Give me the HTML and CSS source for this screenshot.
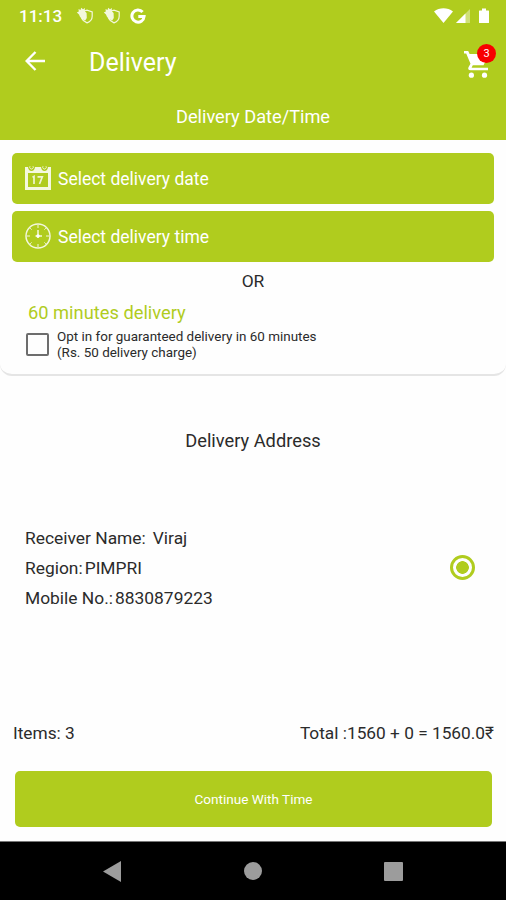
FILE: index.html
```html
<!DOCTYPE html>
<html lang="en">
<head>
<meta charset="utf-8">
<title>Delivery</title>
<link rel="stylesheet" href="styles.css">
</head>
<body>
<div class="screen">
  <header class="header">
    <div class="status">
      <span class="clock">11:13</span>
      <svg class="shield" viewBox="0 0 18 18"><path d="M8 4 11 3.200l5.200 1.800v4.200c0 3.200-2.200 5.500-5.200 6.700-3-1.200-4.500-2.600-5.500-4.600" fill="none" stroke="#fff" stroke-width="1.200" opacity=".85"/><path d="M.8 5.500 2.800 4.500 2.500 2 4.500 3l.7-2.200L7 2.200 9 1 8.600 4l2 2 .2 5-1.600 2.500C6 12.500 3.800 10.500 3 7.500z" fill="#fff" opacity=".85"/></svg>
      <svg class="shield" viewBox="0 0 18 18"><path d="M8 4 11 3.200l5.200 1.800v4.200c0 3.200-2.200 5.500-5.200 6.700-3-1.200-4.500-2.600-5.500-4.600" fill="none" stroke="#fff" stroke-width="1.200" opacity=".85"/><path d="M.8 5.500 2.800 4.500 2.500 2 4.500 3l.7-2.200L7 2.200 9 1 8.600 4l2 2 .2 5-1.600 2.500C6 12.500 3.800 10.500 3 7.500z" fill="#fff" opacity=".85"/></svg>
      <svg class="google" viewBox="0 0 16 16"><path d="M12.600 4A6.100 6.100 0 1 0 14.100 8.500H8.300" fill="none" stroke="#fff" stroke-width="3"/></svg>
      <svg class="signals" viewBox="0 0 58 18"><path d="M0 4.500C5.500.200 13.500.200 19 4.500L9.500 16z" fill="#fff"/><path d="M22 16 36 2v14z" fill="#fff" opacity=".4"/><path d="M22 16 31.500 6.500V16z" fill="#fff"/><path d="M48 1.500h4v2h2.500q.5 0 .5.500v11.500q0 .5-.5.500h-9q-.5 0-.5-.500V4q0-.5.5-.500H48z" fill="#fff"/></svg>
    </div>
    <div class="appbar">
      <svg class="back" viewBox="0 0 20 20"><path d="M20 10H1.800M10.500 1 1.600 10l8.900 9" fill="none" stroke="#fff" stroke-width="2.400"/></svg>
      <h1>Delivery</h1>
      <div class="cart">
        <svg viewBox="0 0 26 27" fill="#fff"><path d="M0 0h4.200l1.400 3H25L19.500 14.300H8.800l-1.200 2.400H24v2.600H6.500C4.300 19.300 3.700 17.500 4.600 16l1.900-3.200L2.200 2.500H0z"/><circle cx="7.400" cy="24.200" r="2.600"/><circle cx="20.500" cy="24.200" r="2.600"/></svg>
        <span class="badge">3</span>
      </div>
    </div>
    <h2>Delivery Date/Time</h2>
  </header>

  <section class="card">
    <button class="pick">
      <svg viewBox="0 0 26 26"><path d="M0 2h3q.5 4 3.500 4T10 2h6q.5 4 3.500 4T23 2h3v23H0zm3 6v14h20V8z" fill="#fff" fill-rule="evenodd" opacity=".86"/><path d="M5 1.200a1.800 1.800 0 1 0 3 0M18 1.200a1.800 1.800 0 1 0 3 0" fill="none" stroke="#fff" opacity=".75"/><path d="M7.500 12.300 9 11.500V19M12.500 11.800h4.800L14.500 19" fill="none" stroke="#fff" stroke-width="1.700" opacity=".8"/></svg>
      <span>Select delivery date</span>
    </button>
    <button class="pick">
      <svg viewBox="0 0 26 26"><g fill="none" stroke="#fff" opacity=".85"><circle cx="13" cy="13" r="12" stroke-width="1.500"/><path d="M13 2v3M13 21v3M2 13h3M21 13h3M5.200 5.200l1.400 1.400M19.400 19.400l1.400 1.400M5.200 20.800l1.400-1.400M19.400 6.600l1.400-1.400" stroke-width="1"/><path d="M13 7v8M10.500 13H17" stroke-width="1.500"/></g><circle cx="13" cy="13" r="1.700" fill="#fff"/></svg>
      <span>Select delivery time</span>
    </button>
    <p class="or">OR</p>
    <h3>60 minutes delivery</h3>
    <label class="optin">
      <span class="box"></span>
      <span class="terms">Opt in for guaranteed delivery in 60 minutes<br>(Rs. 50 delivery charge)</span>
    </label>
  </section>

  <h2 class="address-title">Delivery Address</h2>
  <section class="address">
    <div class="details">
      <p><span>Receiver Name:</span><span class="name">Viraj</span></p>
      <p><span>Region:</span><span class="value">PIMPRI</span></p>
      <p><span>Mobile No.:</span><span class="value">8830879223</span></p>
    </div>
    <span class="radio"></span>
  </section>

  <div class="summary"><span>Items: 3</span><span>Total :1560 + 0 = 1560.0₹</span></div>
  <button class="continue">Continue With Time</button>
  <nav class="nav">
    <svg viewBox="0 0 18 21"><path d="M0 10.500 18 0v21z" fill="#9c9c9c"/></svg>
    <span class="home"></span>
    <span class="recent"></span>
  </nav>
</div>
</body>
</html>
```

FILE: styles.css
```css
* { box-sizing: border-box; }
body { margin: 0; font-family: Roboto, sans-serif; color: #2b2b2b; background: #fefefe; }
h1, h2, h3, p { margin: 0; font-weight: 400; }
svg { display: block; flex: none; }
button { border: 0; font: inherit; color: #fff; background: #b0cc1e; }
.screen { width: 506px; height: 900px; display: flex; flex-direction: column; overflow: hidden; }
.header { height: 140px; flex: none; background: #b0cc1e; color: #fff; }
.status { height: 32px; display: flex; align-items: center; padding: 0 14px 0 19px; }
.clock { width: 57px; font-size: 17px; font-weight: 500; }
.shield { width: 18px; height: 18px; margin-right: 9px; }
.google { width: 16px; height: 16px; }
.signals { width: 58px; height: 18px; margin-left: auto; }
.appbar { height: 60px; display: flex; align-items: center; padding: 0 10px 0 25px; }
.back { width: 20px; height: 20px; margin-top: -2px; }
.appbar h1 { margin-left: 44px; padding-top: 1px; font-size: 25px; line-height: 30px; }
.cart { position: relative; width: 32px; height: 36px; margin-left: auto; padding-top: 7px; }
.cart svg { width: 26px; height: 27px; }
.badge { position: absolute; top: 0; right: 0; width: 19px; height: 19px; border-radius: 50%; background: #f80000; font-size: 11px; line-height: 20px; text-align: center; }
.header h2 { font-size: 18.200px; line-height: 50px; text-align: center; }
.card { height: 236px; flex: none; padding: 13px 12px 0; border-bottom: 2px solid #e5e5e5; border-radius: 0 0 12px 12px; }
.pick { display: flex; align-items: center; width: 482px; height: 51px; margin-bottom: 7px; padding: 0 13px; border-radius: 5px; gap: 7px; font-size: 17.500px; }
.pick svg { width: 26px; height: 26px; margin-top: -2px; }
.or { padding-top: 2px; font-size: 17.400px; line-height: 20px; text-align: center; }
.card h3 { margin: 10px 0 0 16px; font-size: 18.300px; line-height: 24px; color: #b0cc1e; }
.optin { display: flex; align-items: center; margin: 3px 0 0 14px; gap: 8px; }
.box { width: 23px; height: 23px; border: 2px solid #6d6d6d; border-radius: 2px; }
.terms { padding-top: 1px; font-size: 13.450px; line-height: 16px; }
.address-title { margin-top: 53px; font-size: 18.250px; line-height: 24px; text-align: center; }
.address { display: flex; align-items: center; justify-content: space-between; margin-top: 70px; padding: 0 31px 0 25px; }
.details p { display: flex; font-size: 17.400px; line-height: 30px; }
.name { margin-left: 7px; }
.value { margin-left: 2px; }
.radio { width: 25px; height: 25px; margin-top: -2px; border: 3px solid #b0cc1e; border-radius: 50%; background: radial-gradient(circle, #b0cc1e 0 6px, transparent 6.600px); }
.summary { display: flex; justify-content: space-between; margin: 108px 12px 0 13px; font-size: 17.300px; line-height: 24px; }
.continue { width: 477px; height: 56px; margin: 26px 0 0 15px; padding: 0; border-radius: 5px; font-size: 13.550px; flex: none; }
.nav { display: flex; align-items: center; height: 59px; margin-top: auto; padding: 0 103px; justify-content: space-between; background: #000; border-top: 1px solid #777; flex: none; }
.nav svg { width: 18px; height: 21px; }
.home { width: 18px; height: 18px; border-radius: 50%; background: #9c9c9c; }
.recent { width: 19px; height: 19px; border-radius: 1px; background: #9c9c9c; }
```
